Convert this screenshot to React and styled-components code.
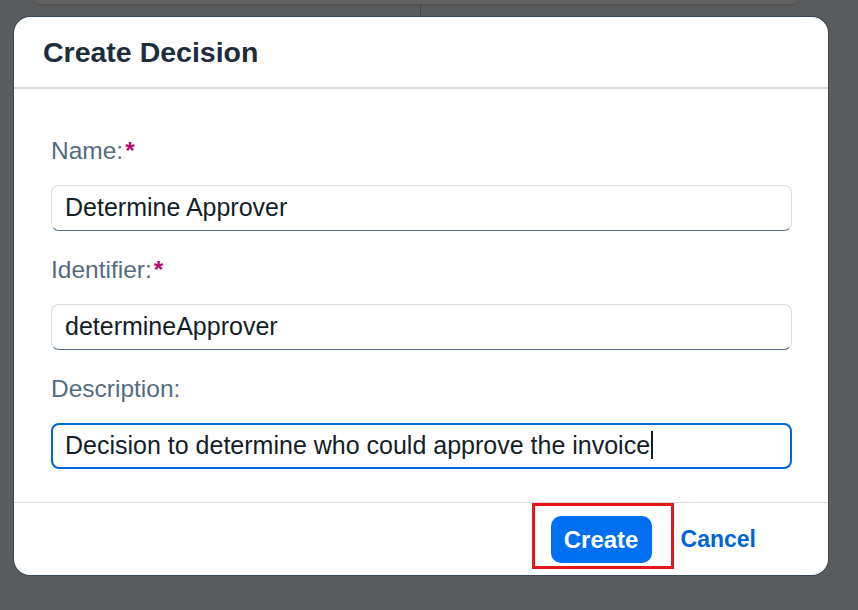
import React from 'react';
import styled, {createGlobalStyle} from 'styled-components';

const GlobalStyle = createGlobalStyle`
  html, body {
    margin: 0;
    padding: 0;
    background: #5b5c5e;
  }
  body {
    font-family: "Liberation Sans", Arial, sans-serif;
  }
`;

const fields = [
  {label: 'Name:', value: 'Determine Approver', required: true},
  {label: 'Identifier:', value: 'determineApprover', required: true},
  {label: 'Description:', value: 'Decision to determine who could approve the invoice', focused: true},
];

const App = () => {
  return (
    <>
      <GlobalStyle />
      <Backdrop>
        <AppCard />
        <Splitter />
        <Dialog>
          <Header>
            <Title>Create Decision</Title>
          </Header>
          <Content>
            {fields.map((f) => (
              <FormRow key={f.label}>
                <Label>
                  {f.label}
                  {f.required && <Required>*</Required>}
                </Label>
                <Field $focused={f.focused}>
                  {f.value}
                  {f.focused && <Caret />}
                </Field>
              </FormRow>
            ))}
          </Content>
          <Footer>
            <Highlight>
              <PrimaryButton type="button">Create</PrimaryButton>
            </Highlight>
            <LinkButton type="button">Cancel</LinkButton>
          </Footer>
        </Dialog>
      </Backdrop>
    </>
  );
};

export default App;

const Backdrop = styled.div`
  display: flex;
  flex-direction: column;
  height: 610px;
  overflow: hidden;
`;

const AppCard = styled.div`
  height: 4px;
  margin: 0 61px 0 35px;
  background: #626263;
  border-radius: 0 0 12px 12px;
  box-shadow: 0 1px 2px rgba(0, 0, 0, 0.15);
`;

const Splitter = styled.div`
  width: 1px;
  height: 13px;
  margin-left: 420px;
  background: #3b4856;
`;

const Dialog = styled.div`
  width: 814px;
  height: 558px;
  margin-left: 14px;
  background: #fff;
  border-radius: 16px;
  box-shadow: 0 0 0 1px #3a4756;
  display: flex;
  flex-direction: column;
  overflow: hidden;
`;

const Header = styled.div`
  height: 70px;
  display: flex;
  align-items: center;
  padding: 0 29px;
  border-bottom: 2px solid #d9d9d9;
`;

const Title = styled.h1`
  margin: 0;
  font-size: 28.5px;
  font-weight: 700;
  color: #1d2d3e;
`;

const Content = styled.div`
  flex: 1;
  padding: 48px 36px 0 37px;
  display: flex;
  flex-direction: column;
  gap: 25px;
`;

const FormRow = styled.div`
  display: flex;
  flex-direction: column;
  gap: 20px;
`;

const Label = styled.div`
  font-size: 24.5px;
  line-height: 28px;
  color: #556b82;
`;

const Required = styled.span`
  color: #ba066c;
  font-weight: 700;
  margin-left: 2px;
`;

const Field = styled.div`
  box-sizing: border-box;
  height: 46px;
  display: flex;
  align-items: center;
  padding: 0 ${({$focused}) => ($focused ? '12px' : '13px')} 2px;
  border-radius: 8px;
  font-size: 25px;
  color: #131e29;
  background: #fff;
  white-space: nowrap;
  border: ${({$focused}) => ($focused ? '2px solid #0064d9' : '1px solid #d5dadd')};
  border-bottom-color: ${({$focused}) => ($focused ? '#0064d9' : '#556b82')};
`;

const Caret = styled.span`
  display: inline-block;
  width: 2px;
  height: 28px;
  margin-left: 1px;
  background: #131e29;
`;

const Footer = styled.div`
  height: 72px;
  border-top: 1px solid #d9d9d9;
  display: flex;
  align-items: center;
  justify-content: flex-end;
  gap: 7px;
  padding-right: 72px;
`;

const Highlight = styled.div`
  align-self: flex-start;
  padding: 10px 19px 3px 16px;
  border: 3px solid #e5161b;
`;

const PrimaryButton = styled.button`
  display: block;
  width: 101px;
  height: 47px;
  border: none;
  border-radius: 10px;
  background: #0070f2;
  color: #fff;
  font-family: "Liberation Sans", Arial, sans-serif;
  font-size: 24px;
  font-weight: 700;
  padding: 0;
`;

const LinkButton = styled.button`
  border: none;
  background: none;
  padding: 0;
  color: #0064d9;
  font-family: "Liberation Sans", Arial, sans-serif;
  font-size: 23px;
  font-weight: 700;
`;
